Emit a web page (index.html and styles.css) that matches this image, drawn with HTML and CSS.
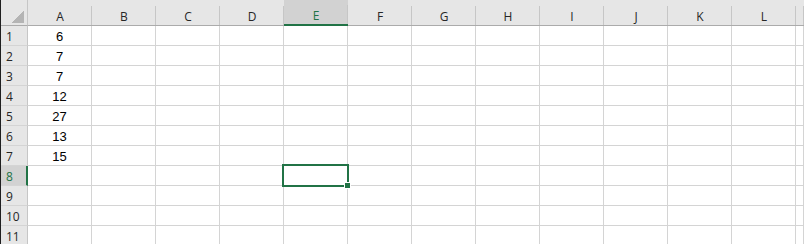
FILE: index.html
```html
<!DOCTYPE html>
<html lang="en">
<head>
    <meta charset="UTF-8">
    <title>Sheet1</title>
    <link rel="stylesheet" href="styles.css">
</head>
<body>

    <div class="sheet">
        <!-- header row -->
        <div class="corner"><span class="tri"></span></div>
        <div class="col-head">A</div>
        <div class="col-head">B</div>
        <div class="col-head">C</div>
        <div class="col-head">D</div>
        <div class="col-head active">E</div>
        <div class="col-head">F</div>
        <div class="col-head">G</div>
        <div class="col-head">H</div>
        <div class="col-head">I</div>
        <div class="col-head">J</div>
        <div class="col-head">K</div>
        <div class="col-head">L</div>
        <div class="col-head"></div>
    </div>

    <script>
        var sheet = document.querySelector(".sheet");
        var colA = [6, 7, 7, 12, 27, 13, 15];

        for (var r = 1; r <= 11; r++) {
            var head = document.createElement("div");
            head.className = "row-head" + (r === 8 ? " active" : "");
            head.textContent = r;
            sheet.appendChild(head);

            for (var c = 0; c < 13; c++) {
                var cell = document.createElement("div");
                cell.className = "cell";
                if (c === 0 && colA[r - 1] !== undefined) {
                    cell.textContent = colA[r - 1];
                }
                // selected cell E8
                if (c === 4 && r === 8) {
                    cell.classList.add("selected");
                    var box = document.createElement("span");
                    box.className = "sel-box";
                    var handle = document.createElement("span");
                    handle.className = "fill-handle";
                    box.appendChild(handle);
                    cell.appendChild(box);
                }
                sheet.appendChild(cell);
            }
        }
    </script>

</body>
</html>
```

FILE: styles.css
```css
* {
    margin: 0;
    padding: 0;
    box-sizing: border-box;
}

body {
    width: 804px;
    height: 244px;
    overflow: hidden;
    background: #ffffff;
    font-family: "Liberation Sans", Arial, sans-serif;
}

.sheet {
    display: grid;
    grid-template-columns: 27px repeat(12, 64px) 1fr;
    grid-template-rows: 26px repeat(11, 20px);
    border-left: 1px solid #1f1f1f;
}

/* Header row */
.corner {
    background: #e6e6e6;
    border-right: 1px solid #c6c6c6;
    border-bottom: 1px solid #ababab;
    padding: 11px 0 0 11px;
}

.corner .tri {
    display: block;
    width: 12px;
    height: 12px;
    background: linear-gradient(to bottom right, transparent 50%, #b4b4b4 50%);
}

.col-head {
    background: linear-gradient(#c6c6c6, #c6c6c6) right bottom / 1px 19px no-repeat, #e6e6e6;
    border-bottom: 1px solid #ababab;
    color: #262626;
    font-family: "Open Sans", "Liberation Sans", sans-serif;
    font-size: 12px;
    display: flex;
    align-items: flex-end;
    justify-content: center;
    padding-bottom: 0;
}

.col-head.active {
    background: linear-gradient(#c6c6c6, #c6c6c6) right bottom / 1px 19px no-repeat, #d2d2d2;
    border-bottom: 2px solid #217346;
    color: #217346;
}

/* Row header */
.row-head {
    background: #e6e6e6;
    border-right: 1px solid #c6c6c6;
    border-bottom: 1px solid #d4d4d4;
    color: #262626;
    font-family: "Open Sans", "Liberation Sans", sans-serif;
    font-size: 12px;
    display: flex;
    align-items: center;
    padding: 2px 0 0 5px;
}

.row-head.active {
    background: #d2d2d2;
    border-right: 2px solid #217346;
    color: #217346;
}

/* Cells */
.cell {
    border-right: 1px solid #d4d4d4;
    border-bottom: 1px solid #d4d4d4;
    font-size: 13px;
    color: #000000;
    display: flex;
    align-items: center;
    justify-content: center;
    padding-top: 2px;
}

.cell.selected {
    position: relative;
}

.sel-box {
    position: absolute;
    top: -2px;
    left: -2px;
    width: 67px;
    height: 23px;
    border: 2px solid #217346;
}

.fill-handle {
    position: absolute;
    right: -4px;
    bottom: -4px;
    width: 7px;
    height: 7px;
    background: #217346;
    border: 1px solid #ffffff;
}
```
